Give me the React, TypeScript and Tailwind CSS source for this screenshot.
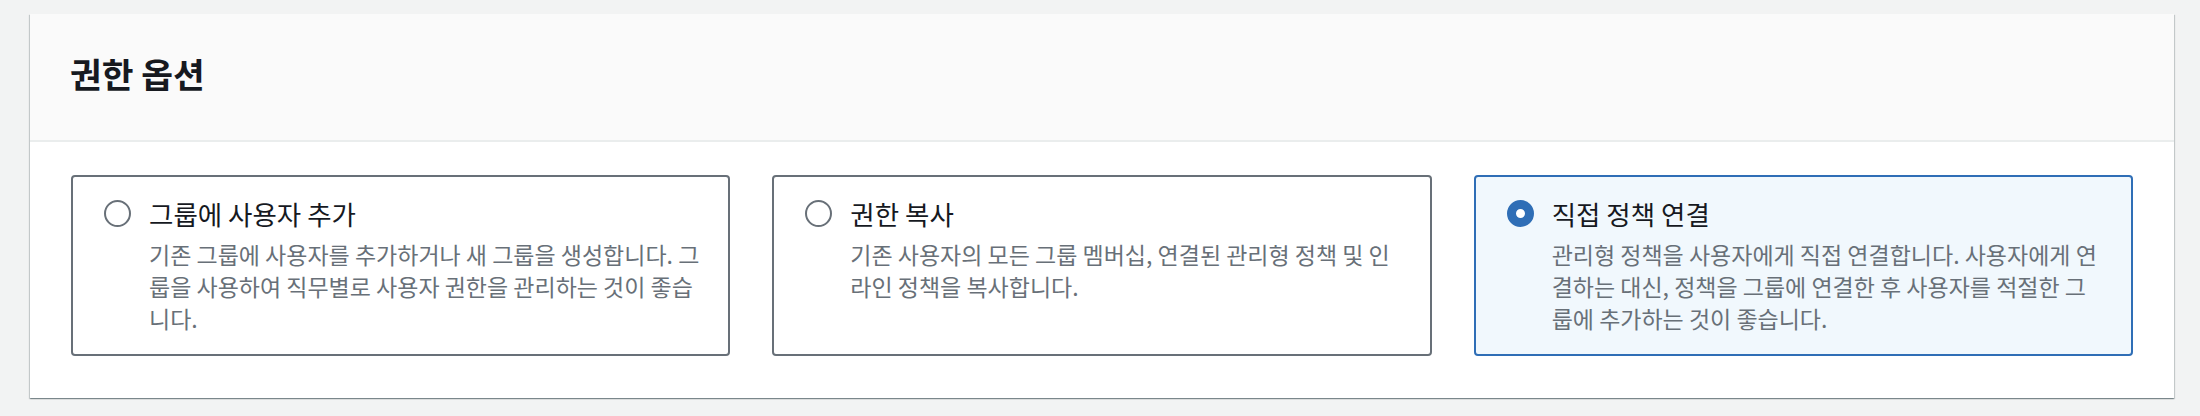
import React from 'react';

type Option = {
  id: string;
  title: string;
  description: string;
};

const options: Option[] = [
  {
    id: 'group',
    title: '그룹에 사용자 추가',
    description:
      '기존 그룹에 사용자를 추가하거나 새 그룹을 생성합니다. 그룹을 사용하여 직무별로 사용자 권한을 관리하는 것이 좋습니다.',
  },
  {
    id: 'copy',
    title: '권한 복사',
    description: '기존 사용자의 모든 그룹 멤버십, 연결된 관리형 정책 및 인라인 정책을 복사합니다.',
  },
  {
    id: 'attach',
    title: '직접 정책 연결',
    description:
      '관리형 정책을 사용자에게 직접 연결합니다. 사용자에게 연결하는 대신, 정책을 그룹에 연결한 후 사용자를 적절한 그룹에 추가하는 것이 좋습니다.',
  },
];

function RadioTile({ option, selected }: { option: Option; selected: boolean }) {
  return (
    <label
      className={`flex items-start gap-[18px] rounded-[4px] border-2 pt-[18px] pb-[20px] pl-[31px] pr-[27px] cursor-pointer ${
        selected ? 'border-[#2f6eb6] bg-[#f1f8fd]' : 'border-[#687078] bg-white'
      }`}
    >
      <span
        className={`mt-[5px] h-[27px] w-[27px] shrink-0 rounded-full bg-white ${
          selected ? 'border-[9px] border-[#2f6eb6]' : 'border-2 border-[#687078]'
        }`}
      ></span>
      <span className="flex flex-col min-w-0 flex-1">
        <span className="text-[26.5px] leading-[37px] text-[#16191f]">{option.title}</span>
        <span className="mt-[6px] text-[23px] leading-[32px] text-[#687078]">{option.description}</span>
      </span>
    </label>
  );
}

export default function App() {
  const selected = 'attach';

  return (
    <div
      className="min-h-screen bg-[#f2f3f3] pt-[14px] pl-[30px]"
      style={{ fontFamily: '"Noto Sans CJK KR", "Noto Sans", sans-serif' }}
    >
      <div className="w-[2144px] bg-white shadow-[0_1px_1px_0_rgba(0,28,36,0.3),1px_1px_1px_0_rgba(0,28,36,0.15),-1px_1px_1px_0_rgba(0,28,36,0.15)]">
        {/* Header */}
        <div className="bg-[#fafafa] border-b-2 border-[#eaeded] pt-[39px] pb-[47px] px-[40px]">
          <h2 className="text-[34.5px] leading-[40px] font-bold text-[#16191f]">권한 옵션</h2>
        </div>

        {/* Options */}
        <div className="grid grid-cols-3 gap-[42px] px-[41px] pt-[33px] pb-[42px]">
          {options.map(o => (
            <RadioTile key={o.id} option={o} selected={o.id === selected} />
          ))}
        </div>
      </div>
    </div>
  );
}
